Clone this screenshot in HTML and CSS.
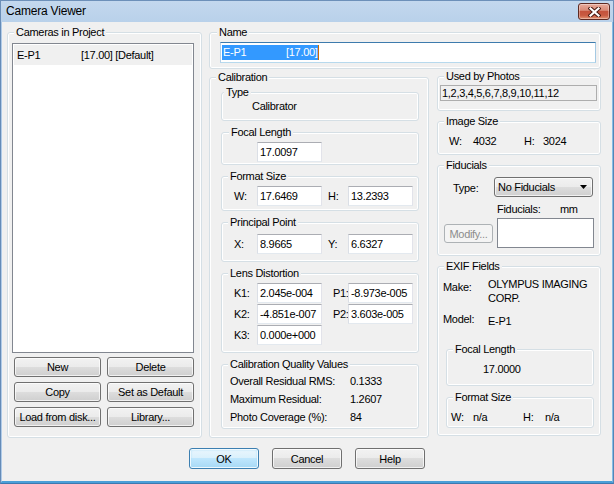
FILE: index.html
```html
<!DOCTYPE html>
<html>
<head>
<meta charset="utf-8">
<title>Camera Viewer</title>
<link rel="stylesheet" href="styles.css">
</head>
<body>
<div class="window">
  <div class="titlebar">
    <span class="title">Camera Viewer</span>
    <button class="close" aria-label="Close">
      <svg width="13" height="10" viewBox="0 0 13 10"><path d="M2.5 1.5 L10.5 8.5 M10.5 1.5 L2.5 8.5" stroke="#4a1a12" stroke-width="4.2" stroke-linecap="square"/><path d="M2.5 1.5 L10.5 8.5 M10.5 1.5 L2.5 8.5" stroke="#ffffff" stroke-width="2.2" stroke-linecap="square"/></svg>
    </button>
  </div>
  <div class="client">
    <div class="main">
      <fieldset class="group cameras">
        <legend>Cameras in Project</legend>
        <div class="listbox">
          <div class="list-item"><span class="cam-name">E-P1</span><span>[17.00] [Default]</span></div>
        </div>
        <div class="cam-buttons">
          <button class="btn">New</button>
          <button class="btn">Delete</button>
          <button class="btn">Copy</button>
          <button class="btn">Set as Default</button>
          <button class="btn">Load from disk...</button>
          <button class="btn">Library...</button>
        </div>
      </fieldset>

      <div class="right">
        <fieldset class="group name-group">
          <legend class="legend-wide">Name</legend>
          <div class="edit name-edit"><span class="sel"><span class="sel-name">E-P1</span>[17.00]</span><span class="caret"></span></div>
        </fieldset>

        <div class="lower">
          <fieldset class="group calib">
            <legend>Calibration</legend>
            <div class="stack">
              <fieldset class="group type-group">
                <legend class="legend-narrow">Type</legend>
                <div class="type-value">Calibrator</div>
              </fieldset>
              <fieldset class="group fl-group">
                <legend class="legend-wide">Focal Length</legend>
                <div class="edit fl-edit">17.0097</div>
              </fieldset>
              <fieldset class="group fs-group">
                <legend>Format Size</legend>
                <div class="pair">
                  <span>W:</span><div class="edit">17.6469</div>
                  <span class="lbl2">H:</span><div class="edit">13.2393</div>
                </div>
              </fieldset>
              <fieldset class="group pp-group">
                <legend>Principal Point</legend>
                <div class="pair pair-pp">
                  <span>X:</span><div class="edit">8.9665</div>
                  <span class="lbl2">Y:</span><div class="edit">6.6327</div>
                </div>
              </fieldset>
              <fieldset class="group ld-group">
                <legend>Lens Distortion</legend>
                <div class="pair lens">
                  <span>K1:</span><div class="edit">2.045e-004</div>
                  <span class="lbl2">P1:</span><div class="edit">-8.973e-005</div>
                  <span>K2:</span><div class="edit">-4.851e-007</div>
                  <span class="lbl2">P2:</span><div class="edit">3.603e-005</div>
                  <span>K3:</span><div class="edit">0.000e+000</div>
                </div>
              </fieldset>
              <fieldset class="group cq-group">
                <legend>Calibration Quality Values</legend>
                <div class="cq">
                  <span>Overall Residual RMS:</span><span>0.1333</span>
                  <span>Maximum Residual:</span><span>1.2607</span>
                  <span>Photo Coverage (%):</span><span>84</span>
                </div>
              </fieldset>
            </div>
          </fieldset>

          <div class="side">
            <fieldset class="group photos">
              <legend>Used by Photos</legend>
              <div class="photos-box">1,2,3,4,5,6,7,8,9,10,11,12</div>
            </fieldset>
            <fieldset class="group imgsize">
              <legend>Image Size</legend>
              <div class="kv img-kv">
                <span class="img-w">W:</span><span class="img-wv">4032</span><span class="img-h">H:</span><span>3024</span>
              </div>
            </fieldset>
            <fieldset class="group fid">
              <legend>Fiducials</legend>
              <div class="fid-type">
                <span class="fid-type-label">Type:</span>
                <div class="combo"><span>No Fiducials</span><svg width="7" height="4" viewBox="0 0 7 4"><polygon points="0,0 7,0 3.5,4" fill="#000"/></svg></div>
              </div>
              <div class="fid-units"><span class="fid-units-label">Fiducials:</span><span>mm</span></div>
              <div class="fid-list">
                <button class="btn btn-disabled" disabled>Modify...</button>
                <div class="fid-box"></div>
              </div>
            </fieldset>
            <fieldset class="group exif">
              <legend>EXIF Fields</legend>
              <div class="exif-grid">
                <span class="make-label">Make:</span><span>OLYMPUS IMAGING CORP.</span>
                <span class="model-label">Model:</span><span class="model-value">E-P1</span>
              </div>
              <fieldset class="group exif-sub exif-focal">
                <legend>Focal Length</legend>
                <div class="exif-focal-value">17.0000</div>
              </fieldset>
              <fieldset class="group exif-sub exif-format">
                <legend>Format Size</legend>
                <div class="kv exif-kv">
                  <span class="ex-w">W:</span><span class="ex-wv">n/a</span><span class="ex-h">H:</span><span>n/a</span>
                </div>
              </fieldset>
            </fieldset>
          </div>
        </div>
      </div>
    </div>

    <div class="dlg-buttons">
      <button class="btn btn-default">OK</button>
      <button class="btn">Cancel</button>
      <button class="btn">Help</button>
    </div>
  </div>
</div>
</body>
</html>
```

FILE: styles.css
```css
* { box-sizing: border-box; }

html, body { margin: 0; padding: 0; }

body {
  width: 614px;
  height: 484px;
  overflow: hidden;
  background: #ffffff;
  font-family: "Liberation Sans", Arial, sans-serif;
  font-size: 11px;
  letter-spacing: -0.3px;
  color: #000;
}

.window {
  width: 614px;
  height: 484px;
  display: flex;
  flex-direction: column;
  border-style: solid;
  border-width: 0 2px 3px 2px;
  border-color: #b9d1ea #86bde6 #4a9fd8 #b0cbe8;
  outline: 1px solid rgba(52, 96, 150, 0.6);
  outline-offset: -1px;
  background: #f0f0f0;
}

/* ---------- title bar ---------- */
.titlebar {
  flex: none;
  height: 22px;
  margin: 0 -2px;
  padding: 0 4px 0 6px;
  display: flex;
  justify-content: space-between;
  align-items: flex-start;
  background: linear-gradient(#c4d8ee, #b9d1ea);
}

.title {
  font-size: 12px;
  letter-spacing: -0.2px;
  line-height: 22px;
  color: #000;
}

.close {
  width: 32px;
  height: 17px;
  margin-top: 3px;
  padding: 0;
  display: flex;
  align-items: center;
  justify-content: center;
  border: 1px solid #5e2a22;
  border-radius: 3px;
  background: linear-gradient(#e9ab9b 0%, #d98b78 42%, #c5533c 50%, #c85a41 75%, #e29373 100%);
  box-shadow: inset 0 0 0 1px rgba(255, 255, 255, 0.35);
}

/* ---------- client ---------- */
.client {
  flex: 1;
  display: flex;
  flex-direction: column;
  background: #f0f0f0;
}

.main {
  display: flex;
  gap: 7px;
  height: 416px;
  padding: 4px 0 0 5px;
}

.group {
  margin: 0;
  padding: 0;
  min-width: 0;
  border: 1px solid #d5dfe5;
  border-radius: 3px;
  box-shadow: inset 0 0 0 1px #ffffff;
}

legend {
  height: 12px;
  line-height: 12px;
  padding: 0 2px;
  margin-left: 6px;
  background: #f0f0f0;
}

.legend-wide { margin-left: 7px; }
.legend-narrow { margin-left: 2px; }

/* ---------- buttons ---------- */
.btn {
  height: 20px;
  padding: 0;
  font: inherit;
  letter-spacing: inherit;
  color: #000;
  border: 1px solid #707070;
  border-radius: 3px;
  background: linear-gradient(#f2f2f2 0%, #ebebeb 49%, #dddddd 50%, #cfcfcf 100%);
  box-shadow: inset 0 0 0 1px rgba(255, 255, 255, 0.7);
}

.btn-default {
  border-color: #3c7fb1;
  background: linear-gradient(#eaf6fd 0%, #d9f0fc 49%, #bee6fd 50%, #a7d9f5 100%);
  box-shadow: inset 0 0 0 1px rgba(255, 255, 255, 0.8), inset 0 0 2px 1px #a6dcf8;
}

.btn-disabled {
  color: #8c8c8c;
  border-color: #adb2b5;
  background: #f4f4f4;
  box-shadow: none;
}

/* ---------- cameras list ---------- */
.cameras {
  width: 195px;
  height: 412px;
}

.listbox {
  height: 310px;
  margin: 5px 7px 0 4px;
  padding: 1px;
  background: #ffffff;
  border: 1px solid #828790;
}

.list-item {
  height: 20px;
  line-height: 20px;
  padding-left: 3px;
  display: flex;
  background: #f0f0f0;
}

.cam-name { width: 64px; }

.cam-buttons {
  display: grid;
  grid-template-columns: 87px 87px;
  column-gap: 6px;
  row-gap: 5px;
  margin: 4px 0 0 6px;
}

/* ---------- right side ---------- */
.right {
  width: 392px;
  display: flex;
  flex-direction: column;
  gap: 1px;
}

.name-group { height: 43px; }

.edit {
  height: 20px;
  padding: 0 2px;
  line-height: 18px;
  white-space: nowrap;
  overflow: hidden;
  background: #ffffff;
  border: 1px solid;
  border-color: #abadb3 #e2e3ea #e3e9ef #dbdfe6;
}

.name-edit {
  height: 21px;
  margin: 4px 4px 0 10px;
  padding: 2px 0 0 1px;
  display: flex;
  align-items: flex-start;
  border-color: #3d7bad #a4c9e3 #b7d9ed #b5cfe7;
}

.sel {
  display: flex;
  padding-left: 1px;
  line-height: 15px;
  color: #ffffff;
  background: #3399ff;
}

.sel-name { width: 63px; }

.caret {
  width: 1px;
  height: 15px;
  background: #cc6a00;
}

.lower {
  display: flex;
  gap: 8px;
}

/* ---------- calibration ---------- */
.calib {
  width: 220px;
  height: 367px;
  margin-top: 1px;
}

.stack {
  display: flex;
  flex-direction: column;
  gap: 5px;
  margin: 3px 9px 0 11px;
}

.type-group { height: 35px; }
.fl-group { height: 39px; }
.fs-group { height: 41px; }
.pp-group { height: 46px; }
.ld-group { height: 86px; }
.cq-group { height: 71px; }

.type-value {
  padding: 1px 0 0 30px;
  line-height: 14px;
}

.fl-edit {
  width: 65px;
  margin: 4px 0 0 35px;
}

.pair {
  display: grid;
  grid-template-columns: 23px 65px 26px 65px;
  align-items: center;
  row-gap: 1px;
  margin: 4px 0 0 12px;
}

.pair .lbl2 { padding-left: 6px; }
.pair-pp { margin-top: 6px; }
.lens .lbl2 { padding-left: 11px; }

.cq {
  display: grid;
  grid-template-columns: 120px auto;
  line-height: 18px;
  margin: 2px 0 0 8px;
}

/* ---------- side column ---------- */
.side {
  width: 164px;
  display: flex;
  flex-direction: column;
  gap: 4px;
}

.photos { height: 41px; }

.photos-box {
  width: 157px;
  height: 16px;
  margin: 3px 0 0 2px;
  padding-left: 1px;
  line-height: 14px;
  border: 1px solid #adadad;
  background: #f0f0f0;
}

.imgsize { height: 40px; }

.kv {
  display: flex;
  line-height: 14px;
}

.img-kv { padding: 7px 0 0 11px; }
.img-w { width: 24px; }
.img-wv { width: 51px; }
.img-h { width: 19px; }

.fid { height: 97px; }

.fid-type {
  display: flex;
  align-items: center;
  margin: 6px 0 0 15px;
}

.fid-type-label {
  width: 41px;
  padding-top: 2px;
}

.combo {
  width: 99px;
  height: 20px;
  padding: 0 5px 0 3px;
  display: flex;
  align-items: center;
  justify-content: space-between;
  border: 1px solid #707070;
  border-radius: 3px;
  background: linear-gradient(#f2f2f2 0%, #ebebeb 49%, #dddddd 50%, #cfcfcf 100%);
  box-shadow: inset 0 0 0 1px rgba(255, 255, 255, 0.7);
}

.fid-units {
  display: flex;
  margin: 5px 0 0 59px;
  line-height: 14px;
}

.fid-units-label { width: 63px; }

.fid-list {
  display: flex;
  align-items: flex-start;
  gap: 4px;
  margin: 2px 0 0 6px;
}

.fid-list .btn-disabled {
  width: 49px;
  height: 19px;
  margin-top: 6px;
}

.fid-box {
  width: 97px;
  height: 30px;
  background: #ffffff;
  border: 1px solid #828790;
}

.exif { height: 176px; }

.exif-grid {
  display: grid;
  grid-template-columns: 45px 1fr;
  line-height: 14px;
  margin: 5px 0 0 5px;
}

.make-label { margin-top: 3px; }
.model-label { margin-top: 7px; }
.model-value { margin-top: 9px; }

.exif-sub { margin: 0 6px 0 8px; }
.exif-focal { height: 43px; margin-top: 15px; }
.exif-format { height: 37px; margin-top: 5px; }

.exif-focal-value {
  padding: 7px 0 0 36px;
  line-height: 14px;
}

.exif-kv { padding: 7px 0 0 4px; }
.ex-w { width: 22px; }
.ex-wv { width: 50px; }
.ex-h { width: 22px; }

/* ---------- dialog buttons ---------- */
.dlg-buttons {
  display: flex;
  justify-content: center;
  gap: 13px;
  margin-top: 10px;
}

.dlg-buttons .btn {
  width: 70px;
  height: 21px;
}
```
